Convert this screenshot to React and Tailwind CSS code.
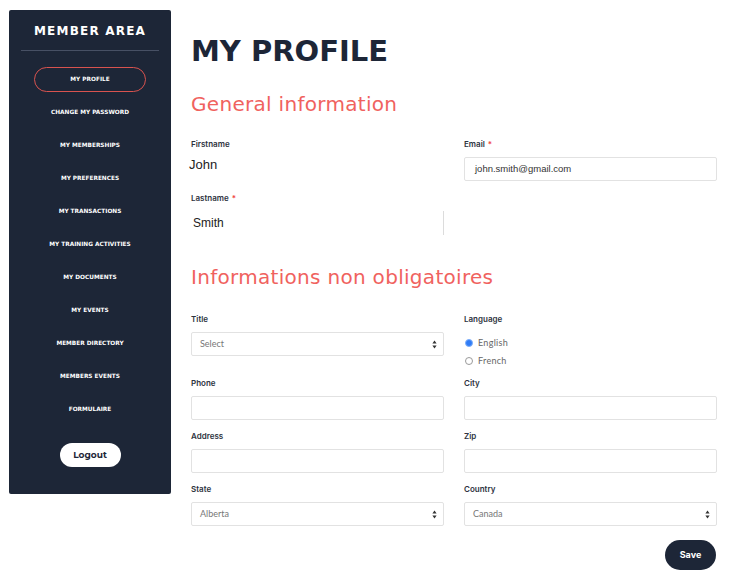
import React from 'react';

const navItems = [
  'My profile',
  'Change my password',
  'My memberships',
  'My preferences',
  'My transactions',
  'My training activities',
  'My documents',
  'My events',
  'Member directory',
  'Members events',
  'Formulaire',
];

const Label = ({ children, required }) => (
  <div className="text-[8px] leading-[10px] font-semibold text-[#2d3340] font-['Inter',sans-serif]">
    {children}
    {required && <span className="text-[#ef4444] ml-[3px]">*</span>}
  </div>
);

const Arrows = () => (
  <svg width="5" height="9" viewBox="0 0 5 9" className="shrink-0">
    <path d="M2.5 0.5 L4.6 3.6 L0.4 3.6 Z" fill="#333" />
    <path d="M2.5 8.5 L4.6 5.4 L0.4 5.4 Z" fill="#333" />
  </svg>
);

const Input = () => (
  <div className="mt-[8px] h-[24px] border border-[#e2e2e2] rounded-[2px] bg-white" />
);

const Select = ({ value }) => (
  <div className="mt-[8px] h-[24px] border border-[#e2e2e2] rounded-[2px] bg-white flex items-center justify-between pl-[8px] pr-[6px]">
    <span className="text-[9px] text-[#777] font-['Lato',sans-serif]">{value}</span>
    <Arrows />
  </div>
);

const Radio = ({ checked, label }) => (
  <div className="flex items-center gap-[5px] h-[12px]">
    {checked ? (
      <span className="w-[8px] h-[8px] rounded-full bg-[#2f7cf6] border border-[#7fb0fa]" />
    ) : (
      <span className="w-[8px] h-[8px] rounded-full bg-white border border-[#9a9a9a]" />
    )}
    <span className="text-[9px] text-[#666] font-['Lato',sans-serif] tracking-[0.3px]">{label}</span>
  </div>
);

const Sidebar = () => (
  <aside className="w-[162px] h-[484px] shrink-0 bg-[#1d2637] rounded-[2px] flex flex-col items-center font-['DejaVu_Sans',sans-serif]">
    <div className="mt-[15px] text-[12px] leading-[12px] font-bold text-white tracking-[1.2px]">MEMBER AREA</div>
    <div className="mt-[13px] w-[138px] h-px bg-[#475064]" />
    <nav className="mt-[16px] flex flex-col items-center gap-[8px]">
      {navItems.map((item, idx) => (
        <div
          key={item}
          className={`h-[25px] flex items-center justify-center text-[5.8px] font-bold uppercase text-white ${idx === 0 ? 'w-[112px] border border-[#d9534f] rounded-full' : ''}`}
        >
          {item}
        </div>
      ))}
    </nav>
    <button className="mt-[21px] w-[61px] h-[24px] rounded-full bg-white text-[#1d2637] text-[9px] font-bold font-['Montserrat','DejaVu_Sans',sans-serif]">
      Logout
    </button>
  </aside>
);

export default function App() {
  return (
    <div className="min-h-[584px] w-[748px] bg-white flex items-start gap-5 pt-[10px] pl-[9px]">
      <Sidebar />
      <main className="w-[526px] flex flex-col">
        <h1 className="mt-[27px] text-[29px] leading-[29px] font-bold text-[#1d2637] font-['DejaVu_Sans',sans-serif]">MY PROFILE</h1>
        <h2 className="mt-[28px] text-[20px] leading-[20px] tracking-[0.3px] text-[#f0625e] font-['DejaVu_Sans',sans-serif]">General information</h2>

        <div className="mt-[25px] grid grid-cols-2 gap-x-5">
          <div className="flex flex-col">
            <Label>Firstname</Label>
            <div className="mt-[7px] h-[18px] -ml-[2px] text-[13px] leading-[18px] text-[#222] font-['Liberation_Sans',sans-serif]">John</div>
            <div className="mt-[19px]">
              <Label required>Lastname</Label>
            </div>
            <div className="mt-[8px] h-[24px] border-r border-[#dcdcdc] flex items-center pl-[2px] text-[12px] text-[#222] font-['Liberation_Sans',sans-serif]">Smith</div>
          </div>
          <div className="flex flex-col">
            <Label required>Email</Label>
            <div className="mt-[8px] h-[24px] border border-[#e2e2e2] rounded-[2px] flex items-center pl-[10px] text-[9.5px] text-[#333] font-['Liberation_Sans',sans-serif]">
              john.smith@gmail.com
            </div>
          </div>
        </div>

        <h2 className="mt-[32px] text-[20px] leading-[20px] tracking-[0.3px] text-[#f0625e] font-['DejaVu_Sans',sans-serif]">Informations non obligatoires</h2>

        <div className="mt-[27px] grid grid-cols-2 gap-x-5 gap-y-[11px]">
          <div>
            <Label>Title</Label>
            <Select value="Select" />
          </div>
          <div>
            <Label>Language</Label>
            <div className="mt-[13px] flex flex-col gap-[6px] pl-[1px]">
              <Radio checked label="English" />
              <Radio label="French" />
            </div>
          </div>
          <div>
            <Label>Phone</Label>
            <Input />
          </div>
          <div>
            <Label>City</Label>
            <Input />
          </div>
          <div>
            <Label>Address</Label>
            <Input />
          </div>
          <div>
            <Label>Zip</Label>
            <Input />
          </div>
          <div>
            <Label>State</Label>
            <Select value="Alberta" />
          </div>
          <div>
            <Label>Country</Label>
            <Select value="Canada" />
          </div>
        </div>

        <div className="mt-[14px] flex justify-end pr-[1px]">
          <button className="w-[51px] h-[30px] rounded-full bg-[#1d2637] text-white text-[9px] font-bold font-['Inter',sans-serif]">Save</button>
        </div>
      </main>
    </div>
  );
}
